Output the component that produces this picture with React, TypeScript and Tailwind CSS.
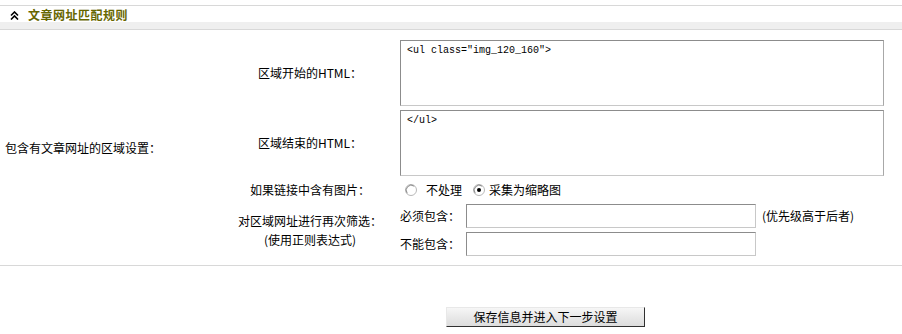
import React from "react";

function Radio({ checked }: { checked?: boolean }) {
  return (
    <svg width="12" height="12" viewBox="0 0 12 12" className="shrink-0">
      <circle cx="6" cy="6" r="5.5" fill="#ffffff" stroke="#b8b8b8" />
      <path d="M2.2 9.2 A5 5 0 0 1 9.2 2.2" fill="none" stroke="#8a8a8a" strokeWidth="1" />
      {checked && <circle cx="6" cy="6" r="2" fill="#000000" />}
    </svg>
  );
}

export default function App() {
  return (
    <div className="w-[902px] h-[334px] bg-white text-[12px] leading-none text-black font-['Noto_Sans_CJK_SC','Noto_Sans',sans-serif] overflow-hidden">
      <div className="h-[5px]" />
      <div className="border-t border-[#d8d8d8]">
        <div className="h-[16px] flex items-end pl-[10px] pb-[1px]">
          <svg width="9" height="9" viewBox="0 0 9 9" className="mb-[1px]">
            <path d="M1 4.5 L4.5 1 L8 4.5" fill="none" stroke="#000" strokeWidth="1.6" />
            <path d="M1 8.5 L4.5 5 L8 8.5" fill="none" stroke="#000" strokeWidth="1.6" />
          </svg>
          <span className="ml-[9px] font-bold text-[#666600] tracking-[0.5px]">文章网址匹配规则</span>
        </div>
        <div className="h-[7px] bg-[#efefef]" />
      </div>

      <div className="border-t border-b border-[#d8d8d8] pt-[8px] pb-[7px] grid grid-cols-[225px_170px_1fr] grid-rows-[70px_70px_24px_28px_28px]">
        <div className="row-span-5 flex items-center pl-[5px]">包含有文章网址的区域设置：</div>

        <div className="flex items-center justify-center">区域开始的HTML：</div>
        <div className="pl-[5px] py-[2px]">
          <textarea
            readOnly
            defaultValue={'<ul class="img_120_160">'}
            className="block w-[484px] h-[66px] resize-none border border-t-[#8c8c8c] border-l-[#8c8c8c] border-r-[#a8a8a8] border-b-[#c8c8c8] px-[6px] py-[3px] font-['Liberation_Mono',monospace] text-[10px] leading-[13px] text-black outline-none"
          />
        </div>

        <div className="flex items-center justify-center">区域结束的HTML：</div>
        <div className="pl-[5px] py-[2px]">
          <textarea
            readOnly
            defaultValue={"</ul>"}
            className="block w-[484px] h-[66px] resize-none border border-t-[#8c8c8c] border-l-[#8c8c8c] border-r-[#a8a8a8] border-b-[#c8c8c8] px-[6px] py-[3px] font-['Liberation_Mono',monospace] text-[10px] leading-[13px] text-black outline-none"
          />
        </div>

        <div className="flex items-center justify-center">如果链接中含有图片：</div>
        <div className="pl-[10px] flex items-center">
          <Radio />
          <span className="ml-[9px]">不处理</span>
          <span className="ml-[11px]"><Radio checked /></span>
          <span className="ml-[4px]">采集为缩略图</span>
        </div>

        <div className="row-span-2 flex flex-col items-center justify-center leading-[19px]">
          <span>对区域网址进行再次筛选：</span>
          <span>(使用正则表达式)</span>
        </div>
        <div className="pl-[5px] flex items-center">
          <span className="w-[66px]">必须包含：</span>
          <input
            readOnly
            className="block w-[290px] h-[24px] border border-t-[#8c8c8c] border-l-[#8c8c8c] border-r-[#c8c8c8] border-b-[#c8c8c8] outline-none"
          />
          <span className="ml-[6px]">(优先级高于后者)</span>
        </div>
        <div className="pl-[5px] flex items-center">
          <span className="w-[66px]">不能包含：</span>
          <input
            readOnly
            className="block w-[290px] h-[24px] border border-t-[#8c8c8c] border-l-[#8c8c8c] border-r-[#c8c8c8] border-b-[#c8c8c8] outline-none"
          />
        </div>
      </div>

      <div className="pt-[41px] pl-[446px]">
        <button className="w-[199px] h-[20px] flex items-center justify-center bg-[linear-gradient(#f6f6f6,#dcdcdc)] border border-t-[#e8e8e8] border-l-[#e8e8e8] border-r-[#303030] border-b-[#303030] text-[12px] text-black">
          保存信息并进入下一步设置
        </button>
      </div>
    </div>
  );
}
